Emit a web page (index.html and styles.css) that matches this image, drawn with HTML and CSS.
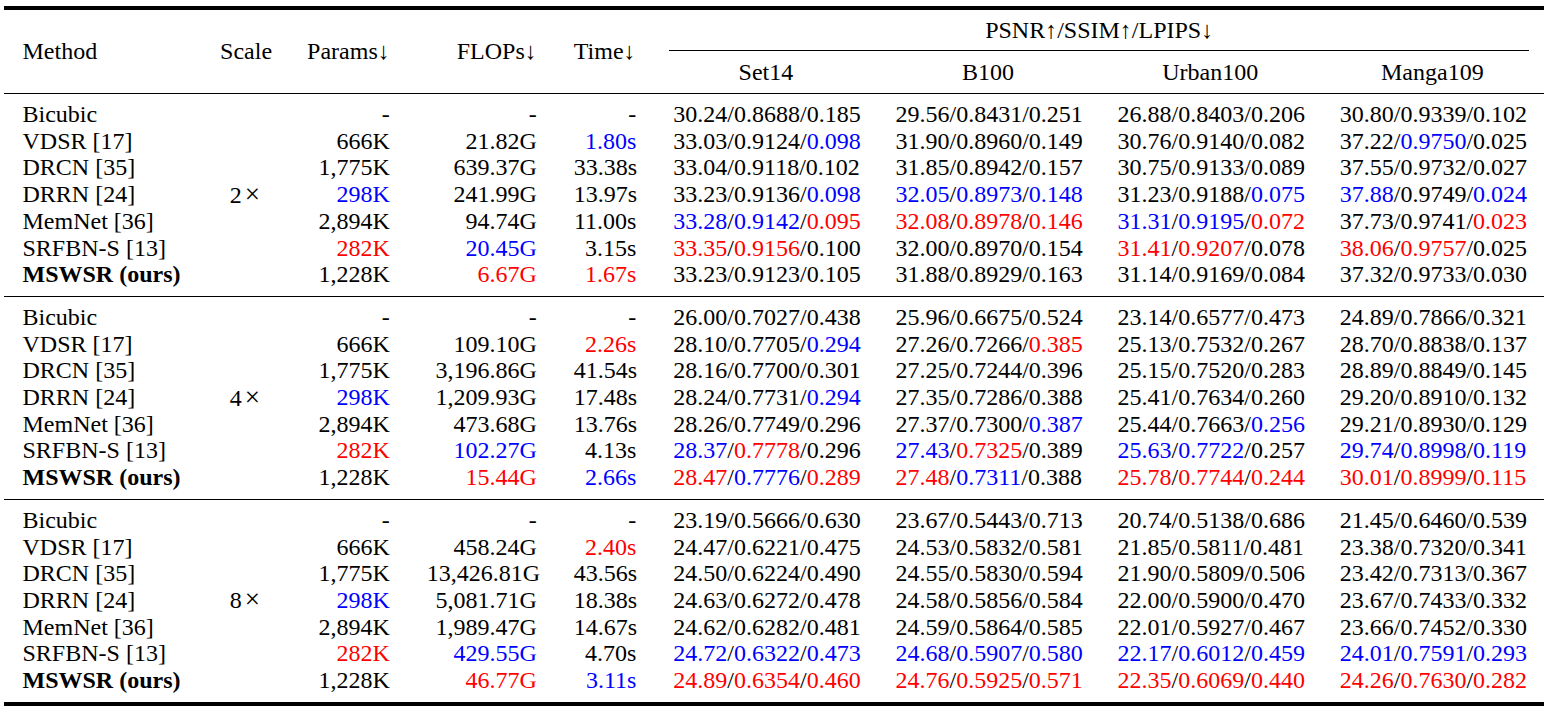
FILE: index.html
```html
<!DOCTYPE html>
<html lang="en">
<head>
<meta charset="utf-8">
<title>Results table</title>
<link rel="stylesheet" href="styles.css">
</head>
<body>
<div class="page">
<table class="results">
  <colgroup>
    <col class="c-method"><col class="c-scale"><col class="c-params"><col class="c-flops"><col class="c-time">
    <col class="c-ds"><col class="c-ds"><col class="c-ds"><col class="c-ds">
  </colgroup>
  <thead>
    <tr>
      <th rowspan="2" class="h-left">Method</th>
      <th rowspan="2" class="h-center">Scale</th>
      <th rowspan="2" class="h-right">Params↓</th>
      <th rowspan="2" class="h-right">FLOPs↓</th>
      <th rowspan="2" class="h-left">Time↓</th>
      <th colspan="4" class="group-head"><div class="group-title">PSNR↑/SSIM↑/LPIPS↓</div></th>
    </tr>
    <tr class="ds-row">
      <th>Set14</th><th>B100</th><th>Urban100</th><th>Manga109</th>
    </tr>
  </thead>
  <tbody class="grp">
    <tr><td>Bicubic</td><td rowspan="7" class="scale">2<span class="times">×</span></td><td class="num">-</td><td class="num">-</td><td class="num">-</td><td>30.24/0.8688/0.185</td><td>29.56/0.8431/0.251</td><td>26.88/0.8403/0.206</td><td>30.80/0.9339/0.102</td></tr>
    <tr><td>VDSR [17]</td><td class="num">666K</td><td class="num">21.82G</td><td class="num"><span class="b">1.80s</span></td><td>33.03/0.9124/<span class="b">0.098</span></td><td>31.90/0.8960/0.149</td><td>30.76/0.9140/0.082</td><td>37.22/<span class="b">0.9750</span>/0.025</td></tr>
    <tr><td>DRCN [35]</td><td class="num">1,775K</td><td class="num">639.37G</td><td class="num">33.38s</td><td>33.04/0.9118/0.102</td><td>31.85/0.8942/0.157</td><td>30.75/0.9133/0.089</td><td>37.55/0.9732/0.027</td></tr>
    <tr><td>DRRN [24]</td><td class="num"><span class="b">298K</span></td><td class="num">241.99G</td><td class="num">13.97s</td><td>33.23/0.9136/<span class="b">0.098</span></td><td><span class="b">32.05</span>/<span class="b">0.8973</span>/<span class="b">0.148</span></td><td>31.23/0.9188/<span class="b">0.075</span></td><td><span class="b">37.88</span>/0.9749/<span class="b">0.024</span></td></tr>
    <tr><td>MemNet [36]</td><td class="num">2,894K</td><td class="num">94.74G</td><td class="num">11.00s</td><td><span class="b">33.28</span>/<span class="b">0.9142</span>/<span class="r">0.095</span></td><td><span class="r">32.08</span>/<span class="r">0.8978</span>/<span class="r">0.146</span></td><td><span class="b">31.31</span>/<span class="b">0.9195</span>/<span class="r">0.072</span></td><td>37.73/0.9741/<span class="r">0.023</span></td></tr>
    <tr><td>SRFBN-S [13]</td><td class="num"><span class="r">282K</span></td><td class="num"><span class="b">20.45G</span></td><td class="num">3.15s</td><td><span class="r">33.35</span>/<span class="r">0.9156</span>/0.100</td><td>32.00/0.8970/0.154</td><td><span class="r">31.41</span>/<span class="r">0.9207</span>/0.078</td><td><span class="r">38.06</span>/<span class="r">0.9757</span>/0.025</td></tr>
    <tr><td class="ours">MSWSR (ours)</td><td class="num">1,228K</td><td class="num"><span class="r">6.67G</span></td><td class="num"><span class="r">1.67s</span></td><td>33.23/0.9123/0.105</td><td>31.88/0.8929/0.163</td><td>31.14/0.9169/0.084</td><td>37.32/0.9733/0.030</td></tr>
  </tbody>
  <tbody class="grp">
    <tr><td>Bicubic</td><td rowspan="7" class="scale">4<span class="times">×</span></td><td class="num">-</td><td class="num">-</td><td class="num">-</td><td>26.00/0.7027/0.438</td><td>25.96/0.6675/0.524</td><td>23.14/0.6577/0.473</td><td>24.89/0.7866/0.321</td></tr>
    <tr><td>VDSR [17]</td><td class="num">666K</td><td class="num">109.10G</td><td class="num"><span class="r">2.26s</span></td><td>28.10/0.7705/<span class="b">0.294</span></td><td>27.26/0.7266/<span class="r">0.385</span></td><td>25.13/0.7532/0.267</td><td>28.70/0.8838/0.137</td></tr>
    <tr><td>DRCN [35]</td><td class="num">1,775K</td><td class="num">3,196.86G</td><td class="num">41.54s</td><td>28.16/0.7700/0.301</td><td>27.25/0.7244/0.396</td><td>25.15/0.7520/0.283</td><td>28.89/0.8849/0.145</td></tr>
    <tr><td>DRRN [24]</td><td class="num"><span class="b">298K</span></td><td class="num">1,209.93G</td><td class="num">17.48s</td><td>28.24/0.7731/<span class="b">0.294</span></td><td>27.35/0.7286/0.388</td><td>25.41/0.7634/0.260</td><td>29.20/0.8910/0.132</td></tr>
    <tr><td>MemNet [36]</td><td class="num">2,894K</td><td class="num">473.68G</td><td class="num">13.76s</td><td>28.26/0.7749/0.296</td><td>27.37/0.7300/<span class="b">0.387</span></td><td>25.44/0.7663/<span class="b">0.256</span></td><td>29.21/0.8930/0.129</td></tr>
    <tr><td>SRFBN-S [13]</td><td class="num"><span class="r">282K</span></td><td class="num"><span class="b">102.27G</span></td><td class="num">4.13s</td><td><span class="b">28.37</span>/<span class="r">0.7778</span>/0.296</td><td><span class="b">27.43</span>/<span class="r">0.7325</span>/0.389</td><td><span class="b">25.63</span>/<span class="b">0.7722</span>/0.257</td><td><span class="b">29.74</span>/<span class="b">0.8998</span>/<span class="b">0.119</span></td></tr>
    <tr><td class="ours">MSWSR (ours)</td><td class="num">1,228K</td><td class="num"><span class="r">15.44G</span></td><td class="num"><span class="b">2.66s</span></td><td><span class="r">28.47</span>/<span class="b">0.7776</span>/<span class="r">0.289</span></td><td><span class="r">27.48</span>/<span class="b">0.7311</span>/0.388</td><td><span class="r">25.78</span>/<span class="r">0.7744</span>/<span class="r">0.244</span></td><td><span class="r">30.01</span>/<span class="r">0.8999</span>/<span class="r">0.115</span></td></tr>
  </tbody>
  <tbody class="grp">
    <tr><td>Bicubic</td><td rowspan="7" class="scale">8<span class="times">×</span></td><td class="num">-</td><td class="num">-</td><td class="num">-</td><td>23.19/0.5666/0.630</td><td>23.67/0.5443/0.713</td><td>20.74/0.5138/0.686</td><td>21.45/0.6460/0.539</td></tr>
    <tr><td>VDSR [17]</td><td class="num">666K</td><td class="num">458.24G</td><td class="num"><span class="r">2.40s</span></td><td>24.47/0.6221/0.475</td><td>24.53/0.5832/0.581</td><td>21.85/0.5811/0.481</td><td>23.38/0.7320/0.341</td></tr>
    <tr><td>DRCN [35]</td><td class="num">1,775K</td><td class="num">13,426.81G</td><td class="num">43.56s</td><td>24.50/0.6224/0.490</td><td>24.55/0.5830/0.594</td><td>21.90/0.5809/0.506</td><td>23.42/0.7313/0.367</td></tr>
    <tr><td>DRRN [24]</td><td class="num"><span class="b">298K</span></td><td class="num">5,081.71G</td><td class="num">18.38s</td><td>24.63/0.6272/0.478</td><td>24.58/0.5856/0.584</td><td>22.00/0.5900/0.470</td><td>23.67/0.7433/0.332</td></tr>
    <tr><td>MemNet [36]</td><td class="num">2,894K</td><td class="num">1,989.47G</td><td class="num">14.67s</td><td>24.62/0.6282/0.481</td><td>24.59/0.5864/0.585</td><td>22.01/0.5927/0.467</td><td>23.66/0.7452/0.330</td></tr>
    <tr><td>SRFBN-S [13]</td><td class="num"><span class="r">282K</span></td><td class="num"><span class="b">429.55G</span></td><td class="num">4.70s</td><td><span class="b">24.72</span>/<span class="b">0.6322</span>/<span class="b">0.473</span></td><td><span class="b">24.68</span>/<span class="b">0.5907</span>/<span class="b">0.580</span></td><td><span class="b">22.17</span>/<span class="b">0.6012</span>/<span class="b">0.459</span></td><td><span class="b">24.01</span>/<span class="b">0.7591</span>/<span class="b">0.293</span></td></tr>
    <tr><td class="ours">MSWSR (ours)</td><td class="num">1,228K</td><td class="num"><span class="r">46.77G</span></td><td class="num"><span class="b">3.11s</span></td><td><span class="r">24.89</span>/<span class="r">0.6354</span>/<span class="r">0.460</span></td><td><span class="r">24.76</span>/<span class="r">0.5925</span>/<span class="r">0.571</span></td><td><span class="r">22.35</span>/<span class="r">0.6069</span>/<span class="r">0.440</span></td><td><span class="r">24.26</span>/<span class="r">0.7630</span>/<span class="r">0.282</span></td></tr>
  </tbody>
</table>
</div>
</body>
</html>
```

FILE: styles.css
```css
html, body {
  margin: 0;
  padding: 0;
  background: #ffffff;
}

.page {
  padding: 6px 0 0 4px;
}

.results {
  table-layout: fixed;
  width: 1539.5px;
  border-collapse: separate;
  border-spacing: 0;
  border-top: 4px solid #000;
  border-bottom: 4px solid #000;
  font-family: "Liberation Serif", "Times New Roman", serif;
  font-size: 24px;
  color: #000;
}

.c-method { width: 197.5px; }
.c-scale { width: 86.5px; }
.c-params { width: 120px; }
.c-flops { width: 147px; }
.c-time { width: 99.5px; }
.c-ds { width: 222px; }

.results th,
.results td {
  padding: 0 18.5px;
  white-space: nowrap;
  font-weight: normal;
}

.results th {
  vertical-align: middle;
  border-bottom: 1px solid #000;
}

.h-left { text-align: left; }
.h-center { text-align: center; }
.h-right { text-align: right; }

.results th.group-head {
  padding: 0;
  border-bottom: none;
  text-align: center;
}

.group-title {
  margin: 0 14.5px;
  height: 40px;
  line-height: 40px;
  border-bottom: 1px solid #000;
}

.ds-row th {
  height: 42px;
  line-height: 40px;
  padding-bottom: 0;
  text-align: center;
}

.results td {
  line-height: 26.7px;
  text-align: center;
  vertical-align: middle;
}

.results td:first-child {
  text-align: left;
}

.results td.num {
  text-align: right;
}

.results td.scale {
  text-align: center;
}

.times {
  margin-left: 3px;
  font-size: 27px;
}

.grp tr:first-child td {
  padding-top: 7px;
}

.grp tr:last-child td,
.grp td.scale {
  padding-bottom: 8px;
}

.grp:not(:last-of-type) tr:last-child td,
.grp:not(:last-of-type) td.scale {
  border-bottom: 1px solid #000;
}

.results td.ours {
  font-weight: bold;
}

.r { color: #ff0000; }
.b { color: #0000ff; }
```
